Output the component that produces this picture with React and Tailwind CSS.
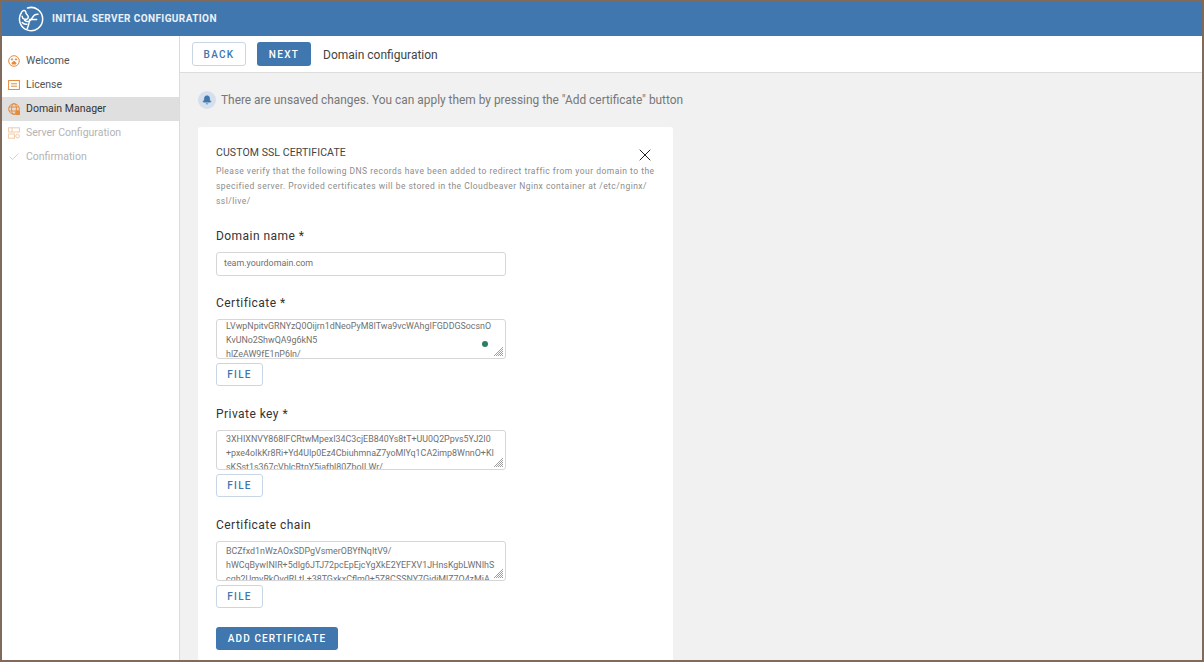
import { X, Check, Bell } from "lucide-react";

const Logo = () => (
  <svg width="26" height="26" viewBox="0 0 26 26" fill="none" stroke="#fff" strokeWidth="1.500" strokeLinecap="round">
    <path d="M9.500 2A11.600 11.600 0 1 1 3.500 6.500" />
    <path d="M4 5.500c1-1 2.500-1.300 3.200-.6.8.7.4 1.800 1.100 2.800.8 1.200 2 1.800 2 3.400 0 2-2.200 2.600-4 2-1.300-.5-2-1.600-2.200-2.800" />
    <path d="M6.600 14.300c1.400 1 3 1.400 4.600.8 2.600-1 3-4.400 5.200-6 1-.7 2.200-1 3.600-.9" />
    <path d="M11.600 13.600h7" />
    <path d="M11.400 15c-.4 2.800-.9 5-2.200 7.600" />
    <path d="M4.200 16.600c1.600 1.800 3 2 4.800 1.600" />
  </svg>
);

const navIcons = {
  welcome: (
    <svg width="12" height="12" viewBox="0 0 12 12" fill="none" stroke="#e58b3f" strokeWidth="1">
      <circle cx="6" cy="6" r="5.300" />
      <circle cx="4" cy="4.400" r=".7" fill="#e58b3f" />
      <circle cx="8" cy="4.400" r=".7" fill="#e58b3f" />
      <path d="M4 9c0-1.600 1-2.600 2-2.600S8 7.400 8 9z" fill="#e58b3f" />
    </svg>
  ),
  license: (
    <svg width="12" height="12" viewBox="0 0 12 12" fill="none" stroke="#e58b3f" strokeWidth="1">
      <rect x=".6" y="1.500" width="10.800" height="9" />
      <path d="M3 4.800h6M3 7.200h6" />
    </svg>
  ),
  domain: (
    <svg width="12" height="12" viewBox="0 0 12 12" fill="none" stroke="#e58b3f" strokeWidth="1">
      <circle cx="6" cy="6" r="5.300" />
      <ellipse cx="6" cy="6" rx="2.400" ry="5.300" />
      <path d="M1 4h10M1 8h10" />
      <rect x="7.500" y="7.500" width="4.500" height="4.500" fill="#e58b3f" stroke="none" />
    </svg>
  ),
  server: (
    <svg width="12" height="12" viewBox="0 0 12 12" fill="none" stroke="#f2c9a5" strokeWidth="1">
      <rect x=".6" y=".8" width="10.800" height="4.200" />
      <rect x=".6" y="7" width="5.800" height="4.200" />
      <circle cx="9.500" cy="9.100" r="1.800" />
      <path d="M4 .8v4.200" />
    </svg>
  ),
};

const NavItem = ({ icon, label, active, muted }) => (
  <div className={`flex h-6 items-center pl-[6px] ${active ? "bg-[#dfdfdf]" : ""}`}>
    <span className="flex w-3 justify-center">{icon}</span>
    <span className={`ml-1.5 text-[10.500px] ${muted ? "text-[#b4b4b4]" : active ? "text-[#333]" : "text-[#555]"}`}>{label}</span>
  </div>
);

const Grip = () => (
  <svg className="absolute bottom-[1px] right-[1px]" width="11" height="11" viewBox="0 0 11 11" stroke="#777" strokeWidth=".7">
    <path d="M1 10 10 1M3 10l7-7M5 10l5-5M7 10l3-3M9 10l1-1" />
  </svg>
);

const OutlineBtn = ({ children, className = "" }) => (
  <button className={`rounded-[3px] border border-[#c8d6e6] bg-white text-[10px] font-medium tracking-[1.300px] text-[#4077ae] ${className}`}>
    {children}
  </button>
);

const CertField = ({ label, lines, offset, dot, className = "" }) => (
  <div className={className}>
    <div className="text-[12px] leading-4 tracking-[0.450px] text-[#333]">{label}</div>
    <div className="relative mt-2 h-10 w-[290px] overflow-hidden rounded-[3px] border border-[#d6d6d6] bg-white pl-[9px]">
      <div className={`whitespace-nowrap text-[8.900px] leading-[14px] text-[#707070] ${offset}`}>
        {lines.map((l) => <div key={l}>{l}</div>)}
      </div>
      {dot && <span className="absolute bottom-[11px] right-[17px] h-[6px] w-[6px] rounded-full bg-[#2e7d67]" />}
      <Grip />
    </div>
    <OutlineBtn className="mt-1 h-[23px] w-[47px]">FILE</OutlineBtn>
  </div>
);

export default function App() {
  return (
    <div className="flex h-[662px] w-[1204px] flex-col overflow-hidden border-2 border-[#7f6a5c] font-['Roboto',sans-serif]">
      <header className="flex h-[34px] shrink-0 items-center bg-[#4077ae] pb-[1px] pl-4">
        <Logo />
        <span className="ml-2 text-[10px] font-bold tracking-[0.400px] text-white/90">INITIAL SERVER CONFIGURATION</span>
      </header>
      <div className="flex min-h-0 flex-1">
        <aside className="w-[178px] shrink-0 border-r border-[#dcdcdc] bg-white pt-[13px]">
          <NavItem icon={navIcons.welcome} label="Welcome" />
          <NavItem icon={navIcons.license} label="License" />
          <NavItem icon={navIcons.domain} label="Domain Manager" active />
          <NavItem icon={navIcons.server} label="Server Configuration" muted />
          <NavItem icon={<Check size={14} color="#eeb98c" strokeWidth={1.500} />} label="Confirmation" muted />
        </aside>
        <main className="flex min-w-0 flex-1 flex-col bg-[#f1f1f1]">
          <div className="flex h-[37px] shrink-0 items-center border-b border-[#dcdcdc] bg-white pl-3">
            <OutlineBtn className="h-6 w-[54px]">BACK</OutlineBtn>
            <button className="ml-[11px] h-6 w-[54px] rounded-[3px] bg-[#4077ae] text-[10px] font-medium tracking-[1.300px] text-white">NEXT</button>
            <span className="ml-3 pt-[1px] text-[12px] text-[#444]">Domain configuration</span>
          </div>
          <div className="min-h-0 flex-1 overflow-hidden px-[18px] pt-[18px]">
            <div className="flex h-[18px] items-center">
              <span className="flex h-[18px] w-[18px] items-center justify-center rounded-full bg-[#d5e0ec]">
                <Bell size={10} fill="#4077ae" stroke="#4077ae" />
              </span>
              <span className="ml-[5px] pt-[1px] text-[11.900px] text-[#777]">There are unsaved changes. You can apply them by pressing the "Add certificate" button</span>
            </div>
            <div className="relative mt-[18px] h-[560px] w-[475px] rounded-[3px] bg-white px-[18px] pt-[19px]">
              <X className="absolute right-[18px] top-[18px]" size={20} color="#222" strokeWidth={1.200} />
              <div className="text-[10.500px] leading-[14px] tracking-[0.100px] text-[#444]">CUSTOM SSL CERTIFICATE</div>
              <p className="mt-1 w-[446px] text-[8.500px] leading-[15px] tracking-[0.470px] text-[#8c8c8c]">
                Please verify that the following DNS records have been added to redirect traffic from your domain to the specified server. Provided certificates will be stored in the Cloudbeaver Nginx container at /etc/nginx/<wbr />ssl/live/
              </p>
              <div className="mt-[19px] text-[12px] leading-4 tracking-[0.450px] text-[#333]">Domain name *</div>
              <div className="mt-[8px] flex h-6 w-[290px] items-center rounded-[3px] border border-[#d6d6d6] bg-white pl-[7px] text-[8.900px] text-[#707070]">team.yourdomain.com</div>
              <CertField
                className="mt-[19px]"
                label="Certificate *"
                offset="-mt-[1px]"
                dot
                lines={["LVwpNpitvGRNYzQ0Oijrn1dNeoPyM8ITwa9vcWAhgIFGDDGSocsnO", "KvUNo2ShwQA9g6kN5", "hlZeAW9fE1nP6ln/"]}
              />
              <CertField
                className="mt-5"
                label="Private key *"
                offset="mt-[1px]"
                lines={["3XHIXNVY868IFCRtwMpexI34C3cjEB840Ys8tT+UU0Q2Ppvs5YJ2I0", "+pxe4oIkKr8Ri+Yd4UIp0Ez4CbiuhmnaZ7yoMIYq1CA2imp8WnnO+KI", "sKSst1s367cVblcRtnY5iafhl80ZboIl.Wr/"]}
              />
              <CertField
                className="mt-5"
                label="Certificate chain"
                offset="-mt-[12px]"
                lines={["TWdE3AKLMN7OHVyRDSWA4gHKLNRTVXZ1A3E5H8KqNRT", "BCZfxd1nWzAOxSDPgVsmerOBYfNqItV9/", "hWCqBywINIR+5dIg6JTJ72pcEpEjcYgXkE2YEFXV1JHnsKgbLWNIhS", "cqh2UmvRkOvdRLtL+38TGxkxCflm0+5Z8CSSNY7GidiMlZ7O4zMiA"]}
              />
              <button className="mt-[19px] h-[23px] w-[122px] rounded-[3px] bg-[#4077ae] text-[10px] font-medium tracking-[1.100px] text-white">ADD CERTIFICATE</button>
            </div>
          </div>
        </main>
      </div>
    </div>
  );
}
